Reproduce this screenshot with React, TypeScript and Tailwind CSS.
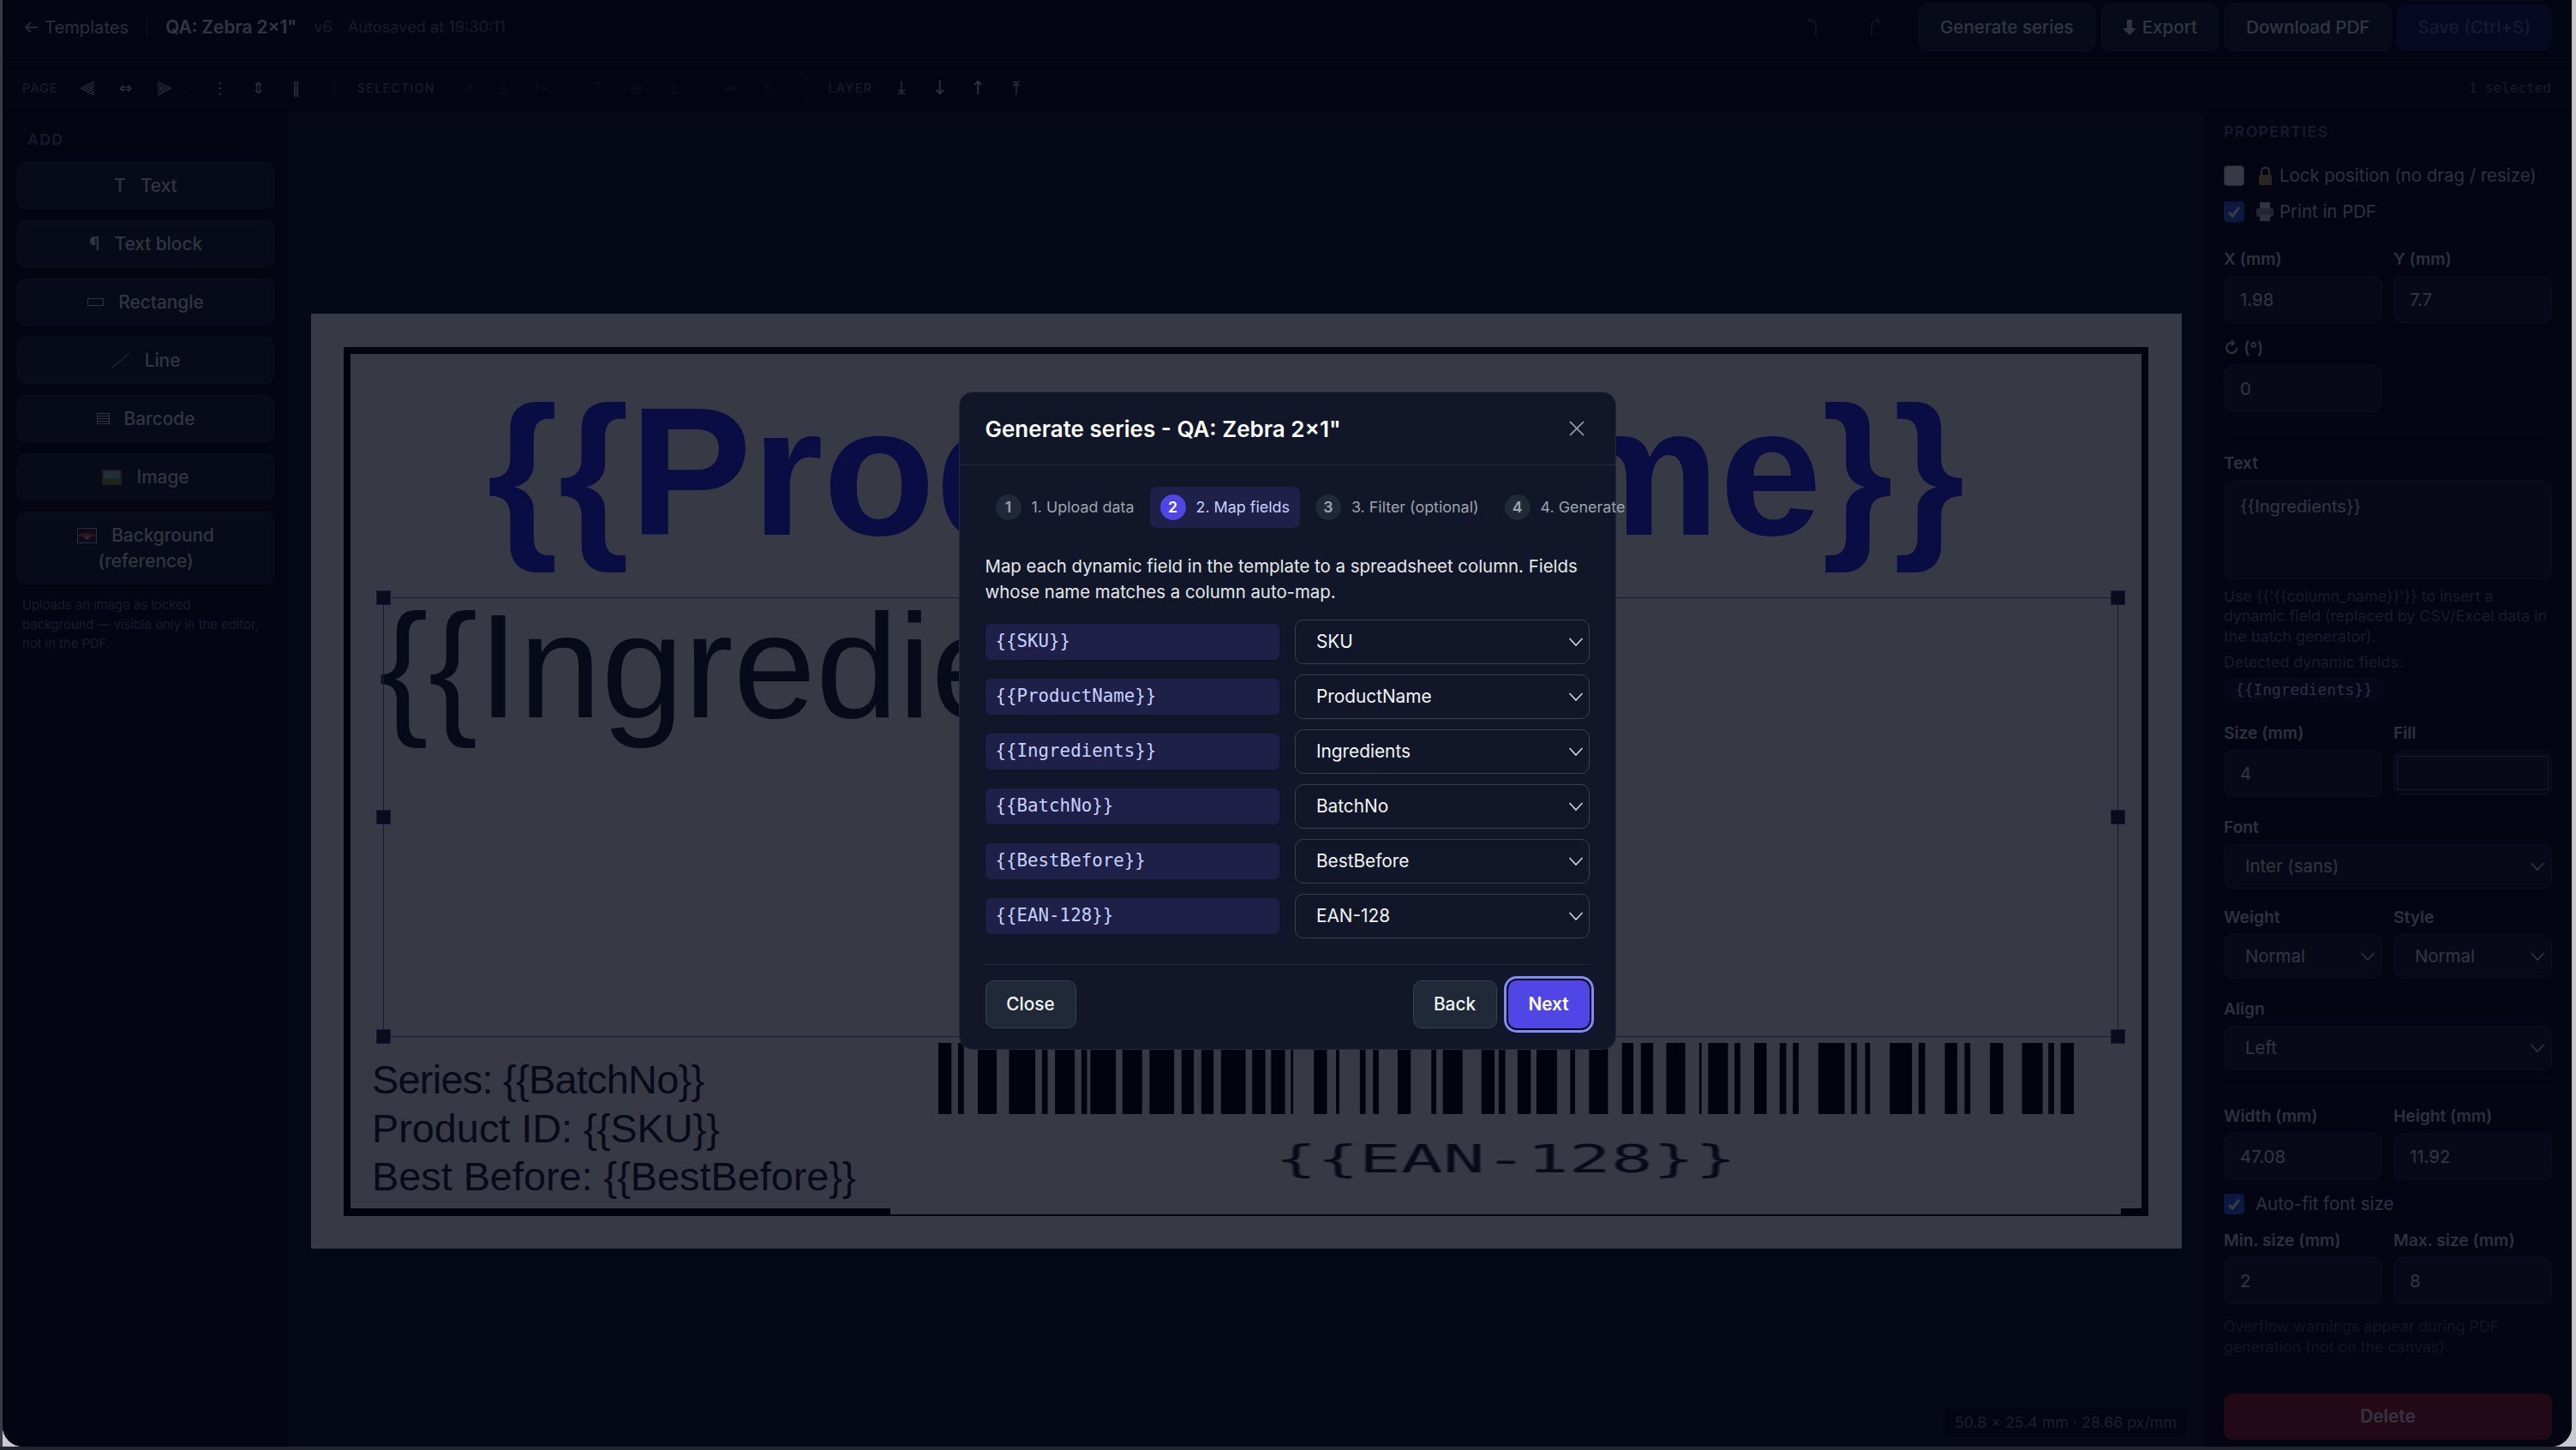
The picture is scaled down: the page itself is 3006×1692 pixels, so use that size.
import React from "react";

const inter = "[font-family:Inter,'Liberation_Sans',sans-serif]";
const mono = "[font-family:'DejaVu_Sans_Mono',monospace]";
const dejavu = "[font-family:'DejaVu_Sans',sans-serif]";
const arial = "[font-family:'Liberation_Sans',Arial,sans-serif]";

const bars: [number, number][] = [[16,32],[40,47],[64,87],[102,134],[142,149],[158,182],[190,197],[201,232],[240,264],[273,303],[312,327],[336,351],[360,390],[398,414],[421,438],[445,448],[473,489],[500,504],[529,536],[545,552],[575,591],[616,622],[630,654],[677,693],[698,706],[721,737],[744,769],[785,791],[808,831],[848,862],[871,886],[902,925],[942,945],[953,977],[985,992],[1009,1024],[1040,1048],[1056,1063],[1087,1119],[1127,1134],[1144,1150],[1174,1201],[1209,1217],[1241,1256],[1265,1272],[1296,1312],[1335,1360],[1367,1374],[1382,1398]];

function Chevron({ dim }: { dim?: boolean }) {
  return (
    <svg width="18" height="12" viewBox="0 0 18 12" className={dim ? "text-[#e5e7eb]" : "text-[#d1d5db]"} fill="none" stroke="currentColor" strokeWidth="1.6">
      <polyline points="1.5,2 9,10 16.5,2" />
    </svg>
  );
}

function Label({ children }: { children: React.ReactNode }) {
  return <div className="h-[20px] text-[19.2px] leading-[20px] font-semibold text-[#d1d5db]">{children}</div>;
}

function Field({ label, value, className }: { label: string; value: string; className?: string }) {
  return (
    <div className={`flex flex-col gap-[10px] ${className ?? ""}`}>
      <Label>{label}</Label>
      <div className="flex h-[55px] items-center rounded-[10px] border border-[#2f3444] bg-[#1c2030] pl-[18px] pt-[1px] text-[20.4px] text-[#e5e7eb]">{value}</div>
    </div>
  );
}

function PropSelect({ label, value, className }: { label: string; value: string; className?: string }) {
  return (
    <div className={`flex flex-col gap-[10px] ${className ?? ""}`}>
      <Label>{label}</Label>
      <div className="flex h-[52px] items-center justify-between rounded-[10px] border border-[#2f3444] bg-[#1c2030] pl-[24px] pr-[7px] text-[20.4px] text-[#e5e7eb]">
        <span>{value}</span>
        <Chevron dim />
      </div>
    </div>
  );
}

function CheckBox({ checked }: { checked?: boolean }) {
  return checked ? (
    <span className="flex h-[24px] w-[24px] shrink-0 items-center justify-center rounded-[4px] bg-[#2f6bf0]">
      <svg width="18" height="18" viewBox="0 0 18 18" fill="none" stroke="#ffffff" strokeWidth="3.2"><polyline points="3,10 7,14 15,4" /></svg>
    </span>
  ) : (
    <span className="h-[24px] w-[24px] shrink-0 rounded-[4px] border border-[#9ca3af] bg-white" />
  );
}

function ToolBtn({ children, tone, big }: { children: React.ReactNode; tone: "bright" | "faint"; big?: boolean }) {
  return (
    <span className={`flex h-[44px] w-[44.5px] items-center justify-center ${dejavu} ${tone === "bright" ? "text-[#d1d5db]" : "text-[#33384a]"} ${big ? "text-[22px]" : "text-[18px]"}`}>
      {children}
    </span>
  );
}

function Dot({ tone }: { tone: "bright" | "faint" }) {
  return <span className={`w-[21px] text-center text-[16px] ${tone === "bright" ? "text-[#4b5063]" : "text-[#33384a]"}`}>·</span>;
}

function ToolLabel({ children }: { children: React.ReactNode }) {
  return <span className="text-[14.4px] font-medium tracking-[0.08em] text-[#6b7280]">{children}</span>;
}

function ToolSep() {
  return <span className="mx-[22px] h-[28px] w-px bg-[#262a38]" />;
}

function Stripe({ dir }: { dir: "l" | "r" }) {
  const t = dir === "l" ? "" : "scale(-1 1) translate(-17 0)";
  return (
    <svg width="17" height="18" viewBox="0 0 17 18" fill="none" stroke="#d1d5db" strokeWidth="1.2">
      <g transform={t}>
        <path d="M16 1 L1 9 L16 17" />
        <path d="M16 4 L6 9 L16 14" />
        <path d="M16 7 L11 9 L16 11" />
      </g>
    </svg>
  );
}

function AddBtn({ icon, label, gap = 17 }: { icon: React.ReactNode; label: string; gap?: number }) {
  return (
    <div className="flex h-[55px] items-center justify-center rounded-[10px] border border-[#2f3444] bg-[#1f2333] text-[20.8px] font-medium text-[#e5e7eb]">
      <span className="flex items-center">{icon}</span>
      <span style={{ marginLeft: gap }}>{label}</span>
    </div>
  );
}

function TopBtn({ children, primary }: { children: React.ReactNode; primary?: boolean }) {
  return primary ? (
    <div className="flex h-[54px] items-center rounded-[10px] bg-[#2b2fa8]/50 px-[24px] text-[20.6px] font-medium text-[#6b6f8c]">{children}</div>
  ) : (
    <div className="flex h-[56px] items-center rounded-[10px] border border-[#2f3444] bg-[#1f2333] px-[24px] text-[20.6px] font-medium text-[#e5e7eb]">{children}</div>
  );
}

function Handle({ className }: { className: string }) {
  return <div className={`absolute h-[17px] w-[17px] border border-[#6366f1] bg-[#2a2b45] ${className}`} />;
}

function Step({ n, label, active }: { n: number; label: string; active?: boolean }) {
  return (
    <div className={`flex h-[48px] flex-none items-center gap-[12px] rounded-[8px] px-[12px] ${active ? "bg-[#1e2048]" : ""}`}>
      <span className={`flex h-[30px] w-[30px] items-center justify-center rounded-full text-[17.6px] font-semibold ${active ? "bg-[#4f46e5] text-white" : "bg-[#1f2937] text-[#9ca3af]"}`}>{n}</span>
      <span className={`whitespace-nowrap text-[17.9px] ${active ? "text-[#c7d2fe]" : "text-[#9ca3af]"}`}>{label}</span>
    </div>
  );
}

function MapRow({ field, column }: { field: string; column: string }) {
  return (
    <div className="flex h-[52px] items-center gap-[18px]">
      <div className={`flex h-[42px] w-[344px] items-center rounded-[6px] bg-[#1e2048] pl-[12px] text-[20.8px] text-[#c7d2fe] ${mono}`}>{field}</div>
      <div className="flex h-[52px] w-[344px] items-center justify-between rounded-[10px] border border-[#374151] bg-[#111729] pl-[24px] pr-[6px] text-[20.8px] text-[#f3f4f6]">
        <span>{column}</span>
        <Chevron />
      </div>
    </div>
  );
}

const rows = [
  ["{{SKU}}", "SKU"],
  ["{{ProductName}}", "ProductName"],
  ["{{Ingredients}}", "Ingredients"],
  ["{{BatchNo}}", "BatchNo"],
  ["{{BestBefore}}", "BestBefore"],
  ["{{EAN-128}}", "EAN-128"],
];

export default function App() {
  return (
    <div className={`flex h-screen w-screen flex-col overflow-hidden bg-[#c9c9cf] ${inter}`}>
      <div className="flex min-h-0 flex-1">
        <div className="w-[3px] shrink-0 bg-[#3d3a44]" />
        <div className="relative flex min-w-0 flex-1 flex-col overflow-hidden rounded-b-[24px] bg-[#141824]">
          {/* top bar */}
          <header className="flex h-[73px] shrink-0 items-center justify-between border-b border-[#262a38] bg-[#0b0d1a] pb-[8px] pl-[24px] pr-[24px]">
            <div className="flex items-center">
              <span className="text-[20.2px] text-[#c4c7d0]">← Templates</span>
              <span className="mx-[21px] h-[21px] w-px bg-[#3a3e4e]" />
              <span className="text-[20.8px] font-semibold text-[#e5e7eb]">QA: Zebra 2×1"</span>
              <span className="ml-[20px] text-[18.2px] text-[#6b7280]">v6</span>
              <span className="ml-[18px] text-[18.2px] text-[#6b7280]">Autosaved at 19:30:11</span>
            </div>
            <div className="flex items-center">
              <div className="flex items-center gap-[29px] text-[#6b7080]">
                <span className="flex w-[44px] justify-center">
                  <svg width="14" height="22" viewBox="0 0 14 22" fill="none" stroke="currentColor" strokeWidth="1.2"><path d="M1 5 L5 1 L5 4 Q11 4 11 9 L11 21" /></svg>
                </span>
                <span className="flex w-[44px] justify-center">
                  <svg width="14" height="22" viewBox="0 0 14 22" fill="none" stroke="currentColor" strokeWidth="1.2"><path d="M13 5 L9 1 L9 4 Q3 4 3 9 L3 21" /></svg>
                </span>
              </div>
              <div className="ml-[29px] flex items-center gap-[7px]">
                <TopBtn>Generate series</TopBtn>
                <TopBtn>
                  <svg width="16" height="18" viewBox="0 0 16 18" fill="#e5e7eb" className="mr-[7px]"><polygon points="5,0 11,0 11,10 16,10 8,18 0,10 5,10" /></svg>
                  Export
                </TopBtn>
                <TopBtn>Download PDF</TopBtn>
                <TopBtn primary>Save (Ctrl+S)</TopBtn>
              </div>
            </div>
          </header>

          {/* toolbar */}
          <div className="flex h-[60px] shrink-0 items-center border-b border-[#1f2330] bg-[#0b0d1a] pl-[23px] pr-[24px]">
            <ToolLabel>PAGE</ToolLabel>
            <span className="ml-[12px]" />
            <ToolBtn tone="bright"><Stripe dir="l" /></ToolBtn>
            <ToolBtn tone="bright">⇔</ToolBtn>
            <ToolBtn tone="bright"><Stripe dir="r" /></ToolBtn>
            <Dot tone="bright" />
            <ToolBtn tone="bright">⋮</ToolBtn>
            <ToolBtn tone="bright">⇕</ToolBtn>
            <ToolBtn tone="bright">‖</ToolBtn>
            <ToolSep />
            <span className="ml-[4px]" />
            <ToolLabel>SELECTION</ToolLabel>
            <span className="ml-[13px]" />
            <ToolBtn tone="faint">⊣</ToolBtn>
            <ToolBtn tone="faint">⊥</ToolBtn>
            <ToolBtn tone="faint">⊢</ToolBtn>
            <Dot tone="faint" />
            <ToolBtn tone="faint">⊤</ToolBtn>
            <ToolBtn tone="faint">⊕</ToolBtn>
            <ToolBtn tone="faint">⊥</ToolBtn>
            <Dot tone="faint" />
            <ToolBtn tone="faint">⇹</ToolBtn>
            <ToolBtn tone="faint">⥮</ToolBtn>
            <ToolSep />
            <span className="ml-[3px]" />
            <ToolLabel>LAYER</ToolLabel>
            <span className="ml-[12px]" />
            <ToolBtn tone="bright" big>⤓</ToolBtn>
            <ToolBtn tone="bright" big>↓</ToolBtn>
            <ToolBtn tone="bright" big>↑</ToolBtn>
            <ToolBtn tone="bright" big>⤒</ToolBtn>
            <span className={`ml-auto text-[16px] text-[#6b7280] ${mono}`}>1 selected</span>
          </div>

          {/* main */}
          <div className="flex min-h-0 flex-1">
            {/* left */}
            <aside className="flex w-[335px] shrink-0 flex-col border-r border-[#1f2330] bg-[#0b0d1a] pl-[17px] pr-[17px] pt-[20px]">
              <div className="ml-[12px] h-[20px] text-[17.6px] font-semibold leading-[20px] tracking-[0.08em] text-[#6b7280]">ADD</div>
              <div className="mt-[16px] flex flex-col gap-[13px]">
                <AddBtn icon={<span>T</span>} label="Text" gap={17} />
                <AddBtn icon={<span>¶</span>} label="Text block" gap={17} />
                <AddBtn icon={<span className="h-[9px] w-[19px] border border-[#e5e7eb]" />} label="Rectangle" />
                <AddBtn
                  icon={<svg width="22" height="18" viewBox="0 0 22 18" stroke="#e5e7eb" strokeWidth="1"><line x1="0" y1="18" x2="21" y2="0" /></svg>}
                  label="Line"
                />
                <AddBtn
                  icon={<svg width="15" height="13" viewBox="0 0 15 13" stroke="#e5e7eb" strokeWidth="1" fill="none"><rect x="0.5" y="0.5" width="14" height="12" /><line x1="0" y1="3.5" x2="15" y2="3.5" /><line x1="0" y1="6.5" x2="15" y2="6.5" /><line x1="0" y1="9.5" x2="15" y2="9.5" /></svg>}
                  label="Barcode"
                />
                <AddBtn
                  icon={
                    <svg width="23" height="18" viewBox="0 0 23 18">
                      <rect width="23" height="18" fill="#a87a2c" />
                      <rect x="2" y="2" width="19" height="14" fill="#8ec5e8" />
                      <rect x="2" y="10" width="19" height="6" fill="#6aa842" />
                      <path d="M2 10 L9 6 L15 10 Z" fill="#c8d8d0" />
                    </svg>
                  }
                  label="Image"
                />
                <div className="flex h-[85px] flex-col items-center justify-center rounded-[10px] border border-[#2f3444] bg-[#1f2333] text-center text-[20.8px] font-medium leading-[30px] text-[#e5e7eb]">
                  <span className="flex items-center">
                    <svg width="23" height="18" viewBox="0 0 23 18" className="mr-[17px]">
                      <rect width="23" height="18" fill="#d8b8c8" />
                      <rect x="1" y="1" width="21" height="16" fill="#3a2a4a" />
                      <path d="M1 9 Q11 3 22 9 L22 10 L1 10 Z" fill="#e8603a" />
                      <path d="M7 10 L11.5 14 L16 10 Z" fill="#f6c64c" />
                    </svg>
                    Background
                  </span>
                  <span>(reference)</span>
                </div>
              </div>
              <p className="mt-[13px] whitespace-nowrap pl-[6px] text-[14.8px] leading-[22.5px] text-[#6b7280]">
                Uploads an image as locked
                <br />
                background — visible only in the editor,
                <br />
                not in the PDF.
              </p>
            </aside>

            {/* canvas */}
            <main className="flex min-w-0 flex-1 items-center justify-center pt-[2px]">
              <div className="relative h-[1091px] w-[2183px] shrink-0 overflow-hidden bg-white">
                <div className="absolute left-[38px] top-[39px] h-[1014px] w-[2106px] border-b-[9px] border-l-[8px] border-r-[8px] border-t-[8px] border-black" />
                <div className="absolute left-[676px] top-[1000px] h-[51px] w-[1436px] bg-white" />
                <div className={`absolute left-[205px] top-[61px] whitespace-nowrap text-[214px] font-bold leading-[246px] text-[#2c2aff] ${arial}`}>{"{{ProductName}}"}</div>
                <div className={`absolute left-[79px] top-[312px] whitespace-nowrap text-[173px] leading-[198px] text-[#1c2433] ${arial}`}>{"{{Ingredients}}"}</div>
                <div className={`absolute left-[71px] top-[866px] whitespace-nowrap text-[46.8px] leading-[56.5px] text-[#1c2433] ${arial}`}>
                  <div className="tracking-[-0.7px]">{"Series: {{BatchNo}}"}</div>
                  <div>{"Product ID: {{SKU}}"}</div>
                  <div>{"Best Before: {{BestBefore}}"}</div>
                </div>
                <svg className="absolute left-[732px] top-[851px]" width="1325" height="83" viewBox="16 0 1382 83" preserveAspectRatio="none">
                  {bars.map(([a, b]) => (
                    <rect key={a} x={a} y="0" width={b - a} height="83" fill="#000000" />
                  ))}
                </svg>
                <div className={`absolute left-[1248px] top-[957px] w-[290px] origin-center scale-x-[1.85] whitespace-nowrap text-center text-[44px] leading-[60px] text-[#1c2433] blur-[0.6px] ${mono}`}>{"{{EAN-128}}"}</div>
                {/* selection */}
                <div className="absolute left-[84px] top-[331px] h-[513px] w-[2025px] border border-[#6366f1]" />
                <Handle className="left-[76px] top-[323px]" />
                <Handle className="left-[2100px] top-[323px]" />
                <Handle className="left-[76px] top-[579px]" />
                <Handle className="left-[2100px] top-[579px]" />
                <Handle className="left-[76px] top-[835px]" />
                <Handle className="left-[2100px] top-[835px]" />
              </div>
            </main>

            {/* right */}
            <aside className="flex w-[430px] shrink-0 flex-col border-l border-[#1f2330] bg-[#0b0d1a] px-[23px] pt-[11px]">
              <div className="h-[20px] text-[17.6px] font-semibold leading-[20px] tracking-[0.08em] text-[#6b7280]">PROPERTIES</div>
              <div className="mt-[29px] flex h-[24px] items-center text-[20.4px] text-[#d1d5db]">
                <CheckBox />
                <svg width="19" height="24" viewBox="0 0 19 24" className="ml-[15px]">
                  <path d="M5 11 V7 a4.5 4.5 0 0 1 9 0 V11" fill="none" stroke="#c9c9c9" strokeWidth="2" />
                  <rect x="2" y="11" width="15" height="12" rx="2" fill="#c4a75a" />
                </svg>
                <span className="ml-[7px]">Lock position (no drag / resize)</span>
              </div>
              <div className="mt-[18px] flex h-[24px] items-center text-[20.4px] text-[#d1d5db]">
                <CheckBox checked />
                <svg width="22" height="24" viewBox="0 0 22 24" className="ml-[13px]">
                  <rect x="5" y="1" width="12" height="8" fill="#e8e8ee" />
                  <rect x="1" y="8" width="20" height="10" rx="2" fill="#9a9aa8" />
                  <rect x="5" y="15" width="12" height="8" fill="#d0d0d8" />
                </svg>
                <span className="ml-[6px]">Print in PDF</span>
              </div>

              <div className="mt-[33px] flex gap-[13px]">
                <Field label="X (mm)" value="1.98" className="w-[185px]" />
                <Field label="Y (mm)" value="7.7" className="w-[185px]" />
              </div>
              <div className="mt-[19px] flex">
                <Field label="↻ (°)" value="0" className="w-[185px]" />
              </div>
              <div className="mt-[25px] h-px bg-[#262a38]" />

              <div className="mt-[23px]"><Label>Text</Label></div>
              <div className="mt-[11px] h-[115px] rounded-[10px] border border-[#2f3444] bg-[#1c2030] pl-[18px] pt-[16px] text-[20.2px] leading-[26px] text-[#e5e7eb]">{"{{Ingredients}}"}</div>
              <p className="mt-[7.5px] text-[17.8px] leading-[23.5px] text-[#6b7280]">
                {"Use {{'{{column_name}}'}} to insert a dynamic field (replaced by CSV/Excel data in the batch generator)."}
              </p>
              <div className="mt-[7px] text-[17.8px] leading-[23.5px] text-[#6b7280]">Detected dynamic fields:</div>
              <div className={`mt-[6.5px] flex h-[29px] w-[187px] items-center justify-center rounded-[5px] bg-[#1e2048]/70 text-[17.8px] text-[#c7d2fe] ${mono}`}>{"{{Ingredients}}"}</div>

              <div className="mt-[25px] flex gap-[13px]">
                <Field label="Size (mm)" value="4" className="w-[185px]" />
                <div className="flex w-[185px] flex-col gap-[10px]">
                  <Label>Fill</Label>
                  <div className="flex h-[53px] items-center justify-center rounded-[10px] border border-[#2f3444] bg-[#1c2030]">
                    <div className="h-[40px] w-[177px] border border-[#6b7280] bg-[#1c2030]" />
                  </div>
                </div>
              </div>

              <PropSelect label="Font" value="Inter (sans)" className="mt-[25px]" />
              <div className="mt-[23px] flex gap-[13px]">
                <PropSelect label="Weight" value="Normal" className="w-[185px]" />
                <PropSelect label="Style" value="Normal" className="w-[185px]" />
              </div>
              <PropSelect label="Align" value="Left" className="mt-[25px]" />
              <div className="mt-[18px] h-px bg-[#262a38]" />

              <div className="mt-[24px] flex gap-[13px]">
                <Field label="Width (mm)" value="47.08" className="w-[185px]" />
                <Field label="Height (mm)" value="11.92" className="w-[185px]" />
              </div>
              <div className="mt-[16px] flex h-[24px] items-center text-[20.4px] text-[#d1d5db]">
                <CheckBox checked />
                <span className="ml-[13px]">Auto-fit font size</span>
              </div>
              <div className="mt-[20px] flex gap-[13px]">
                <Field label="Min. size (mm)" value="2" className="w-[185px]" />
                <Field label="Max. size (mm)" value="8" className="w-[185px]" />
              </div>
              <p className="mt-[14px] text-[17.8px] leading-[24px] text-[#4b5063]">Overflow warnings appear during PDF generation (not on the canvas).</p>
              <div className="mt-[42px] flex h-[54px] items-center justify-center rounded-[10px] bg-[#c81e3a]/80 text-[20.8px] font-semibold text-[#e5e7eb]">Delete</div>
            </aside>
          </div>

          <div className="absolute bottom-[11px] right-[450px] flex h-[34px] items-center rounded-[5px] bg-[#0b0d1a] px-[11px] text-[17.8px] text-[#7b8190]">50.8 × 25.4 mm · 28.66 px/mm</div>

          {/* overlay + dialog */}
          <div className="absolute inset-0 z-10 flex items-center justify-center bg-[#010412]/[.79] pb-[6px]">
            <div className="w-[767px] rounded-[16px] border border-[#1f2937] bg-[#111729]">
              <div className="flex h-[85px] items-center justify-between border-b border-[#1f2a3a] pl-[30px] pr-[36px]">
                <h2 className="text-[26px] font-semibold text-white">Generate series - QA: Zebra 2×1"</h2>
                <svg width="18" height="18" viewBox="0 0 18 18" stroke="#9ca3af" strokeWidth="1.7"><line x1="1" y1="1" x2="17" y2="17" /><line x1="17" y1="1" x2="1" y2="17" /></svg>
              </div>
              <div className="px-[30px] pt-[25px]">
                <div className="flex gap-[6px]">
                  <Step n={1} label="1. Upload data" />
                  <Step n={2} label="2. Map fields" active />
                  <Step n={3} label="3. Filter (optional)" />
                  <Step n={4} label="4. Generate" />
                </div>
                <p className="mt-[30px] text-[20.4px] leading-[30px] text-[#e5e7eb]">
                  Map each dynamic field in the template to a spreadsheet column. Fields whose name matches a column auto-map.
                </p>
                <div className="mt-[17px] flex flex-col gap-[12px]">
                  {rows.map(([f, c]) => (
                    <MapRow key={f} field={f} column={c} />
                  ))}
                </div>
                <div className="mt-[30px] flex items-center justify-between border-t border-[#1f2a3a] pb-[24px] pt-[18px]">
                  <div className="flex h-[56px] w-[106px] items-center justify-center rounded-[10px] border border-[#374151] bg-[#1f2937] text-[20.8px] font-medium text-[#f3f4f6]">Close</div>
                  <div className="flex items-center gap-[13px]">
                    <div className="flex h-[56px] w-[98px] items-center justify-center rounded-[10px] border border-[#374151] bg-[#1f2937] text-[20.8px] font-medium text-[#f3f4f6]">Back</div>
                    <div className="flex h-[56px] w-[95px] items-center justify-center rounded-[10px] bg-[#4f46e5] text-[20.8px] font-semibold text-white shadow-[0_0_0_2px_#070a14,0_0_0_5px_#818cf8]">Next</div>
                  </div>
                </div>
              </div>
            </div>
          </div>
        </div>
        <div className="w-[5px] shrink-0 bg-[#c9c9cf]" />
      </div>
      <div className="h-[4px] shrink-0 bg-[#23252c]" />
    </div>
  );
}
